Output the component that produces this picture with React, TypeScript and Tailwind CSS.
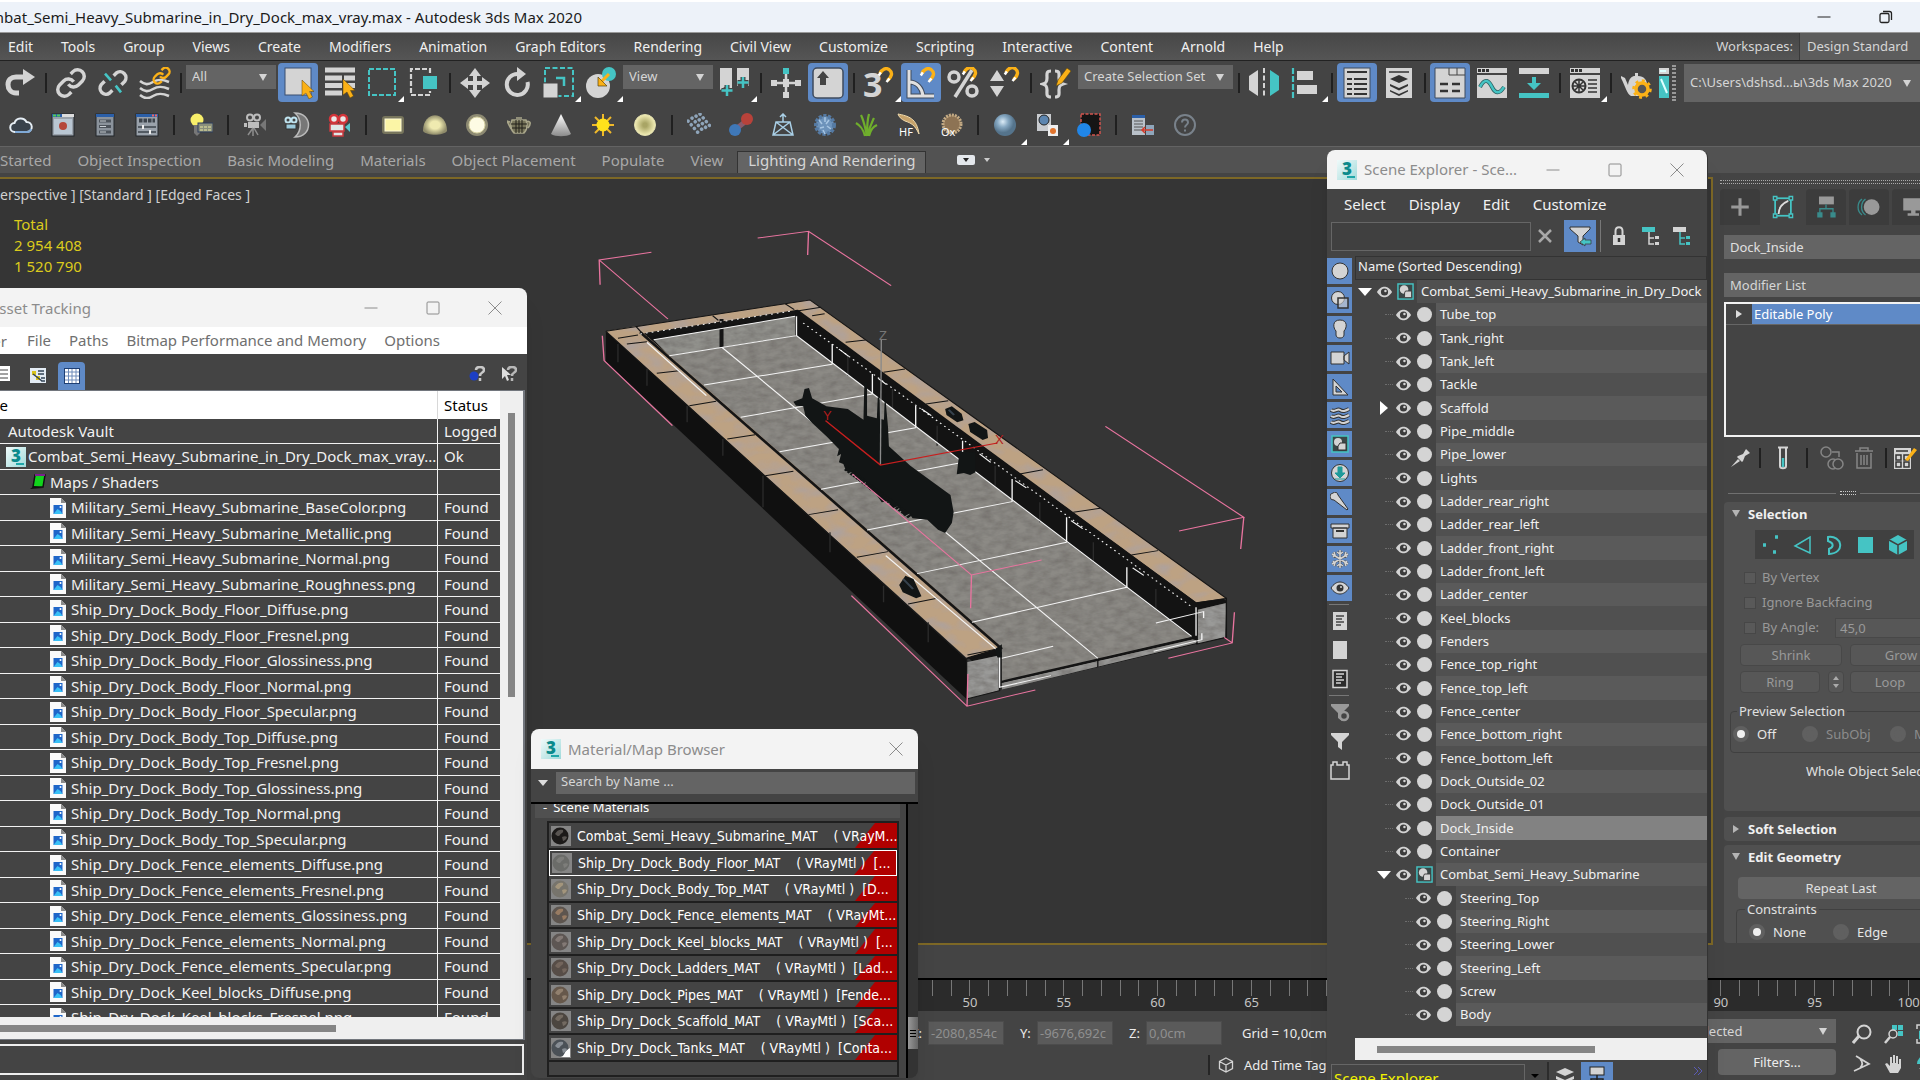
import type { ReactNode } from "react";
import clsx from "clsx";

const GRAY = "#d4d4d4";
const TEAL = "#45c4c4";
const ORANGE = "#fbb117";

const mainMenu = [
  "Edit", "Tools", "Group", "Views", "Create", "Modifiers", "Animation", "Graph Editors",
  "Rendering", "Civil View", "Customize", "Scripting", "Interactive", "Content", "Arnold", "Help",
];

const ribbonTabs = ["Started", "Object Inspection", "Basic Modeling", "Materials", "Object Placement", "Populate", "View"];

const maps = [
  "Military_Semi_Heavy_Submarine_BaseColor.png",
  "Military_Semi_Heavy_Submarine_Metallic.png",
  "Military_Semi_Heavy_Submarine_Normal.png",
  "Military_Semi_Heavy_Submarine_Roughness.png",
  "Ship_Dry_Dock_Body_Floor_Diffuse.png",
  "Ship_Dry_Dock_Body_Floor_Fresnel.png",
  "Ship_Dry_Dock_Body_Floor_Glossiness.png",
  "Ship_Dry_Dock_Body_Floor_Normal.png",
  "Ship_Dry_Dock_Body_Floor_Specular.png",
  "Ship_Dry_Dock_Body_Top_Diffuse.png",
  "Ship_Dry_Dock_Body_Top_Fresnel.png",
  "Ship_Dry_Dock_Body_Top_Glossiness.png",
  "Ship_Dry_Dock_Body_Top_Normal.png",
  "Ship_Dry_Dock_Body_Top_Specular.png",
  "Ship_Dry_Dock_Fence_elements_Diffuse.png",
  "Ship_Dry_Dock_Fence_elements_Fresnel.png",
  "Ship_Dry_Dock_Fence_elements_Glossiness.png",
  "Ship_Dry_Dock_Fence_elements_Normal.png",
  "Ship_Dry_Dock_Fence_elements_Specular.png",
  "Ship_Dry_Dock_Keel_blocks_Diffuse.png",
  "Ship_Dry_Dock_Keel_blocks_Fresnel.png",
];

interface Material {
  name: string;
  type: string;
  tone: string;
  spot: string;
}

const materials: Material[] = [
  { name: "Combat_Semi_Heavy_Submarine_MAT", type: "( VRayM...", tone: "#1c1a19", spot: "#8a8580" },
  { name: "Ship_Dry_Dock_Body_Floor_MAT", type: "( VRayMtl )  [...", tone: "#6b6c69", spot: "#8c8d88" },
  { name: "Ship_Dry_Dock_Body_Top_MAT", type: "( VRayMtl )  [D...", tone: "#77746c", spot: "#c9b08a" },
  { name: "Ship_Dry_Dock_Fence_elements_MAT", type: "( VRayMt...", tone: "#5d554f", spot: "#c99a72" },
  { name: "Ship_Dry_Dock_Keel_blocks_MAT", type: "( VRayMtl )  [...", tone: "#5d5653", spot: "#a39891" },
  { name: "Ship_Dry_Dock_Ladders_MAT", type: "( VRayMtl )  [Lad...", tone: "#574d47", spot: "#8a7a6e" },
  { name: "Ship_Dry_Dock_Pipes_MAT", type: "( VRayMtl )  [Fende...", tone: "#66584b", spot: "#b5a38c" },
  { name: "Ship_Dry_Dock_Scaffold_MAT", type: "( VRayMtl )  [Sca...", tone: "#4c4640", spot: "#94897b" },
  { name: "Ship_Dry_Dock_Tanks_MAT", type: "( VRayMtl )  [Conta...", tone: "#4b5157", spot: "#b9c0c6" },
];

interface Node {
  name: string;
  level: number;
  group?: boolean;
  arrow?: "open" | "closed";
}

const nodes: Node[] = [
  { name: "Combat_Semi_Heavy_Submarine_in_Dry_Dock", level: 0, group: true, arrow: "open" },
  ...["Tube_top", "Tank_right", "Tank_left", "Tackle"].map((name) => ({ name, level: 1 })),
  { name: "Scaffold", level: 1, arrow: "closed" },
  ...[
    "Pipe_middle", "Pipe_lower", "Lights", "Ladder_rear_right", "Ladder_rear_left", "Ladder_front_right",
    "Ladder_front_left", "Ladder_center", "Keel_blocks", "Fenders", "Fence_top_right", "Fence_top_left",
    "Fence_center", "Fence_bottom_right", "Fence_bottom_left", "Dock_Outside_02", "Dock_Outside_01",
    "Dock_Inside", "Container",
  ].map((name) => ({ name, level: 1 })),
  { name: "Combat_Semi_Heavy_Submarine", level: 1, group: true, arrow: "open" },
  ...["Steering_Top", "Steering_Right", "Steering_Lower", "Steering_Left", "Screw", "Body"].map((name) => ({ name, level: 2 })),
];

/* ---------- small shared pieces ---------- */

function Svg({ children, className = "size-8", box = 32 }: { children: ReactNode; className?: string; box?: number }) {
  return (
    <svg className={clsx("shrink-0", className)} viewBox={`0 0 ${box} ${box}`} fill="none" aria-hidden="true">
      {children}
    </svg>
  );
}

function Tool({ label, active, flyout, children }: { label: string; active?: boolean; flyout?: boolean; children: ReactNode }) {
  return (
    <button
      aria-label={label}
      className={clsx("relative flex h-[39px] w-10 shrink-0 items-center justify-center rounded", active && "bg-[#5f8ac7]")}
    >
      {children}
      {flyout && <span className="absolute -right-0.5 bottom-0 size-0 border-[3px] border-transparent border-r-white border-b-white" />}
    </button>
  );
}

function Sep({ wide }: { wide?: boolean }) {
  return (
    <span className={clsx("flex shrink-0 justify-center", wide ? "w-2.5" : "w-[7px]")}>
      <span className="h-5 w-0.5 bg-[#202020]" />
    </span>
  );
}

function Dropdown({ label, value, className }: { label: string; value: string; className: string }) {
  return (
    <div className={clsx("grid shrink-0 grid-cols-1 items-center bg-[#646464] text-[13px] leading-none text-[#d6d6d6]", className)}>
      <select aria-label={label} className="size-full appearance-none pl-1.5 [grid-area:1/1]">
        <option>{value}</option>
      </select>
      <svg className="pointer-events-none mr-2 h-2 w-2.5 justify-self-end [grid-area:1/1]" viewBox="0 0 10 8" fill={GRAY}>
        <path d="M1 1h8L5 8z" />
      </svg>
    </div>
  );
}

function MaxLogo() {
  return (
    <span className="relative flex size-5 shrink-0 justify-center bg-linear-to-br from-[#f0fafa] to-[#9fdada] text-[17px] leading-[18px] font-black text-[#0b8a8c]">
      3<span className="absolute right-0.5 bottom-0.5 h-0.5 w-2 bg-[#1fa6a8]" />
    </span>
  );
}

const Minimize = () => <Svg className="size-4" box={16}><path d="M1.500 8h13" stroke="currentColor" /></Svg>;
const Maximize = () => <Svg className="size-4" box={16}><rect x="2" y="2" width="12" height="12" rx="1" stroke="currentColor" /></Svg>;
const Close = () => <Svg className="size-4" box={16}><path d="M1.500 1.500l13 13M14.500 1.500l-13 13" stroke="currentColor" /></Svg>;

function Magnet({ x, y }: { x: number; y: number }) {
  return (
    <g transform={`translate(${x} ${y})`}>
      <path d="M2 6.500C4 2 8 0.500 11 2.500c4 3 3 7-1.500 11" stroke={ORANGE} strokeWidth="3.400" />
      <path d="M0.800 8.500l2-3.200M11.500 11.500l-3 3.500" stroke="#fff" strokeWidth="2.500" />
    </g>
  );
}

const Cursor = ({ x, y }: { x: number; y: number }) => (
  <path transform={`translate(${x} ${y})`} d="M0 0v16l4-3 3 6 3.500-2-3-5.500H12z" fill={ORANGE} stroke="#5c4308" strokeWidth=".5" />
);

const Eye = ({ className = "h-3.5 w-4" }: { className?: string }) => (
  <svg className={clsx("shrink-0", className)} viewBox="0 0 18 14" fill="none">
    <path d="M1 7C4 2.500 6.500 1.500 9 1.500S14 2.500 17 7c-3 4.500-5.500 5.500-8 5.500S4 11.500 1 7z" fill={GRAY} />
    <circle cx="9" cy="7" r="3.800" fill="#3c3c3c" />
    <circle cx="10" cy="6" r="1.300" fill={GRAY} />
  </svg>
);

function GroupIcon({ className = "size-4" }: { className?: string }) {
  return (
    <Svg className={className} box={18}>
      <rect x="1" y="1" width="16" height="16" fill="#3b4747" stroke={TEAL} strokeWidth="1.500" />
      <circle cx="7.500" cy="7" r="4.500" fill={GRAY} />
      <path d="M9 8.500h6.500v7H8v-5z" fill={GRAY} stroke="#3b3b3b" />
    </Svg>
  );
}

/* ---------- toolbars ---------- */

const chainA = "M10 13a5 5 0 0 0 7.540.54l3-3a5 5 0 0 0-7.070-7.070l-1.720 1.710";
const chainB = "M14 11a5 5 0 0 0-7.540-.54l-3 3a5 5 0 0 0 7.070 7.070l1.710-1.710";

function MainToolbar() {
  return (
    <div className="flex h-[43px] shrink-0 items-center gap-0.5 overflow-hidden">
      <Tool label="Redo">
        <Svg>
          <path d="M19 10h-7c-5 0-8 3-8 7.500S7 26 12 26h3" stroke={GRAY} strokeWidth="5" />
          <path d="M19 2l12 8-12 8z" fill={GRAY} />
        </Svg>
      </Tool>
      <Sep />
      <Tool label="Link"><Svg box={24}><path d={chainA} stroke={GRAY} strokeWidth="2.600" /><path d={chainB} stroke={GRAY} strokeWidth="2.600" /></Svg></Tool>
      <Tool label="Unlink">
        <Svg box={24}>
          <path d="M12.500 6.500l2-2a4.500 4.500 0 0 1 6.300 6.300l-2.500 2.500M11.500 17.500l-2 2a4.500 4.500 0 0 1-6.300-6.300l2.500-2.500" stroke={GRAY} strokeWidth="2.600" />
          <path d="M6 5l4.500 5M14 14l4 5" stroke={TEAL} strokeWidth="2" />
        </Svg>
      </Tool>
      <Tool label="Bind to Space Warp">
        <Svg>
          <path d="M1 14c5 4 8 4 13 1s9-3 16 0M1 21c5 4 8 4 13 1s9-3 16 0M1 28c5 4 8 4 13 1s9-3 16 0" stroke={GRAY} strokeWidth="2.600" />
          <g transform="translate(13 -1) scale(.8)"><path d={chainA} stroke={ORANGE} strokeWidth="3" /><path d={chainB} stroke={ORANGE} strokeWidth="3" /></g>
        </Svg>
      </Tool>
      <Sep />
      <Dropdown label="Selection filter" value="All" className="mb-3 h-6 w-[90px]" />
      <Tool label="Select object" active>
        <Svg><rect x="3" y="1" width="26" height="27" fill={GRAY} stroke="#3a4f70" /><Cursor x={20} y={13} /></Svg>
      </Tool>
      <Tool label="Select by name">
        <Svg><path d="M1 3h30M1 11h17M20 11h11M1 18.500h17M20 18.500h11M1 26h17" stroke={GRAY} strokeWidth="5" /><Cursor x={19} y={12} /></Svg>
      </Tool>
      <Tool label="Rectangular region" flyout>
        <Svg><rect x="3" y="2" width="26" height="26" stroke={TEAL} strokeWidth="2" strokeDasharray="5 2" /></Svg>
      </Tool>
      <Tool label="Window crossing">
        <Svg><path d="M22 6V2H3v26h19v-4" stroke={GRAY} strokeWidth="2.200" strokeDasharray="5 2" /><rect x="15" y="9" width="14" height="13" fill={TEAL} /></Svg>
      </Tool>
      <Sep />
      <Tool label="Move">
        <Svg>
          <path d="M16 5v22M5 16h22" stroke={GRAY} strokeWidth="4" />
          <path d="M16 1l6 8H10zM16 31l6-8H10zM1 16l8-6v12zM31 16l-8-6v12z" fill={GRAY} />
        </Svg>
      </Tool>
      <Tool label="Rotate">
        <Svg><path d="M17 7a10.500 10.500 0 1 0 9.500 8" stroke={GRAY} strokeWidth="4" /><path d="M16 0l9 7-9 7z" fill={GRAY} /></Svg>
      </Tool>
      <Tool label="Scale" flyout>
        <Svg>
          <rect x="2" y="1" width="28" height="28" stroke={TEAL} strokeWidth="2" strokeDasharray="5 2.500" />
          <rect x="0" y="16" width="15" height="15" fill={GRAY} stroke="#444" />
          <path d="M13 11h8v8" stroke={TEAL} strokeWidth="2.500" />
        </Svg>
      </Tool>
      <Tool label="Place" flyout>
        <Svg><circle cx="13" cy="19" r="12" fill={GRAY} /><circle cx="24" cy="7" r="7" fill={TEAL} /><path d="M24 7L15 16" stroke={ORANGE} strokeWidth="3" /><path d="M13 10v9h9z" fill={ORANGE} stroke="#55430f" strokeWidth=".7" /></Svg>
      </Tool>
      <Dropdown label="Reference coordinate system" value="View" className="mb-3 h-6 w-[90px]" />
      <Tool label="Pivot center" flyout>
        <Svg>
          <path d="M1 1h12v22l-6-4-6 4zM18 1h12v18l-6-5-6 5z" fill={GRAY} />
          <path d="M8 18v11M2.500 23.500h11M24 10v11M18.500 15.500h11" stroke="#444" strokeWidth="5" />
          <path d="M8 18v11M2.500 23.500h11M24 10v11M18.500 15.500h11" stroke={TEAL} strokeWidth="2.500" />
        </Svg>
      </Tool>
      <Sep />
      <Tool label="Select and manipulate">
        <Svg><path d="M16 5v22M4 16h24" stroke={GRAY} strokeWidth="2.500" /><path d="M13 12h6v8h-6zM1 13h6v6H1zM25 13h6v6h-6zM13 25h6v6h-6z" fill={GRAY} /><rect x="13" y="1" width="6" height="6" fill={TEAL} /></Svg>
      </Tool>
      <Tool label="Keyboard shortcut override" active>
        <Svg><rect x="1" y="1" width="30" height="30" rx="4" fill={GRAY} stroke="#3f4b5d" strokeWidth="1.500" /><path d="M11 4l6 7h-3v7H8v-7H5z" fill="#444" /></Svg>
      </Tool>
      <Sep />
      <Tool label="Snaps toggle" flyout>
        <Svg><text x="0" y="30" fontSize="34" fontWeight="700" fill={GRAY}>3</text><Magnet x={15} y={0} /></Svg>
      </Tool>
      <Tool label="Angle snap" active>
        <Svg><path d="M4 3v26h25M4 15c8 0 13 6 14 14" stroke="#3f4b5d" strokeWidth="5" /><path d="M4 3v26h25M4 15c8 0 13 6 14 14" stroke="#e0e0e0" strokeWidth="3" /><Magnet x={15} y={0} /></Svg>
      </Tool>
      <Tool label="Percent snap">
        <Svg><path d="M25 3L8 30" stroke={GRAY} strokeWidth="3.500" /><circle cx="7" cy="10" r="5" stroke={GRAY} strokeWidth="3.500" /><circle cx="25" cy="24" r="5" stroke={GRAY} strokeWidth="3.500" /><Magnet x={15} y={-1} /></Svg>
      </Tool>
      <Tool label="Spinner snap">
        <Svg><path d="M8 3l7 11H1zM8 30l7-11H1z" fill={GRAY} /><Magnet x={15} y={-1} /></Svg>
      </Tool>
      <Sep />
      <Tool label="Edit named selection sets">
        <Svg><path d="M11 4C6 4 7 7 7 11s-1 5-4 6c3 1 4 2 4 6s-1 7 4 7M15 4c5 0 4 3 4 7s1 5 4 6c-3 1-4 2-4 6s1 7-4 7" stroke={GRAY} strokeWidth="3.200" /><path d="M16 19l2-6L27 1l4 3-9 12z" fill={ORANGE} stroke="#55430f" strokeWidth=".6" /></Svg>
      </Tool>
      <Dropdown label="Named selection sets" value="Create Selection Set" className="mb-3 h-6 w-[155px]" />
      <Sep />
      <Tool label="Mirror">
        <Svg><path d="M1 3l9 6v14l-9 6z" fill={GRAY} transform="matrix(-1 0 0 1 11 0)" /><path d="M16 1v30" stroke={GRAY} strokeWidth="2" strokeDasharray="5 2.500" /><path d="M31 3l-9 6v14l9 6z" fill={TEAL} transform="matrix(-1 0 0 1 53 0)" /></Svg>
      </Tool>
      <Tool label="Align" flyout>
        <Svg><path d="M3 1v30" stroke={TEAL} strokeWidth="2.200" strokeDasharray="6 2" /><path d="M7 4h16v9H7zM7 18h20v9H7z" fill={GRAY} /></Svg>
      </Tool>
      <Sep />
      <Tool label="Toggle scene explorer" active>
        <Svg><rect x="3" y="1" width="26" height="30" fill={GRAY} stroke="#3f4b5d" /><path d="M6 5h20M6 12h5M13 12h13M6 17h5M13 17h13M6 22h5M13 22h13M6 27h5M13 27h13" stroke="#333" strokeWidth="2" /></Svg>
      </Tool>
      <Tool label="Toggle layer explorer">
        <Svg><rect x="3" y="1" width="26" height="30" fill={GRAY} /><path d="M6 5h20" stroke="#333" strokeWidth="1.500" /><path d="M16 8l9 4-9 4-9-4zM7 17l9 4 9-4v2l-9 4.500L7 19zM7 23l9 4 9-4v1.500l-9 4.500-9-4.500z" fill="#333" /></Svg>
      </Tool>
      <Sep />
      <Tool label="Toggle ribbon" active>
        <Svg><path d="M1 1h30v30H1z" fill={GRAY} stroke="#3f4b5d" /><path d="M15 1v7h16M23 1v7" stroke="#444" /><path d="M6 17h8M18 17h8M6 24h8M18 24h8" stroke="#333" strokeWidth="2.500" /></Svg>
      </Tool>
      <Tool label="Curve editor">
        <Svg><path d="M1 1h30v5H1zM1 8h30v23H1z" fill={GRAY} /><path d="M2 3.500h12" stroke="#333" strokeWidth="3" strokeDasharray="3 1" /><path d="M4 20c5-10 9-6 12 0s7 8 12 0" stroke="#2e5f5f" strokeWidth="4" /><path d="M4 20c5-10 9-6 12 0s7 8 12 0" stroke={TEAL} strokeWidth="2.500" /></Svg>
      </Tool>
      <Tool label="Schematic view">
        <Svg><path d="M1 1h30v6H1z" fill={GRAY} /><path d="M1 26h30v5H1zM14 10h4v6h5l-7 7-7-7h5z" fill={TEAL} /></Svg>
      </Tool>
      <Sep />
      <Tool label="Material editor" flyout>
        <Svg><path d="M1 1h30v5H1zM1 8h30v23H1z" fill={GRAY} /><path d="M2 3.500h12" stroke="#333" strokeWidth="3" strokeDasharray="3 1" /><circle cx="10" cy="19" r="6.500" stroke="#333" strokeWidth="2" /><path d="M10 13v12M4 19h12M6 15l8 8M14 15l-8 8M19 13h9M19 17h9M19 21h9M19 25h9" stroke="#333" strokeWidth="1.500" /></Svg>
      </Tool>
      <Sep />
      <Tool label="Render setup">
        <Svg><path d="M1 9l4 2 3 7c1-7 4-9 7-9V6h3v3c6 0 9 4 9 9s-3 10-4 11H11C7 27 6 21 1 11z" fill={GRAY} /><circle cx="22" cy="22" r="6" fill="#555" stroke={ORANGE} strokeWidth="3.500" /><circle cx="22" cy="22" r="8.500" stroke={ORANGE} strokeWidth="2.500" strokeDasharray="3 3.600" /></Svg>
      </Tool>
      <svg className="h-8 w-3 shrink-0" viewBox="0 0 12 32" fill="none">
        <path d="M1 1h10v6H1z" fill={GRAY} /><path d="M1 9h10v22H1z" fill={TEAL} /><path d="M2 4h6M3 12l6 14" stroke="#dff" strokeWidth="2" />
      </svg>
      <span className="h-9 w-1 shrink-0 border-x-2 border-dotted border-[#999]" />
      <Dropdown label="Project folder" value="C:\Users\dshsd...ы\3ds Max 2020" className="ml-auto h-[38px] w-[236px]" />
    </div>
  );
}

function MiniWindow({ children }: { children: ReactNode }) {
  return (
    <Svg className="size-6" box={24}>
      <rect x="1" y="1" width="22" height="22" fill="#9aa2ab" stroke="#22262b" />
      <path d="M1 1h22v3H1z" fill="#2b5fa8" />
      <path d="M17 2.500h6" stroke="#e66" strokeWidth="2" strokeDasharray="2 1" />
      {children}
    </Svg>
  );
}

function LightsToolbar() {
  return (
    <div className="flex h-[42px] shrink-0 items-center gap-0.5 overflow-hidden pl-px">
      <svg width="0" height="0" className="absolute">
        <defs>
          <radialGradient id="glow"><stop offset=".4" stopColor="#efeab0" /><stop offset="1" stopColor="#8f8b6a" /></radialGradient>
          <radialGradient id="ball" cx=".4" cy=".35"><stop offset="0" stopColor="#dcecf7" /><stop offset=".5" stopColor="#86a8c2" /><stop offset="1" stopColor="#55748c" /></radialGradient>
          <radialGradient id="disc"><stop offset=".2" stopColor="#a9a565" /><stop offset="1" stopColor="#f4efb8" /></radialGradient>
          <linearGradient id="cone" x1="0" x2="0" y1="0" y2="1"><stop offset="0" stopColor="#fff" /><stop offset="1" stopColor="#8a8a8a" /></linearGradient>
        </defs>
      </svg>
      <Tool label="Autodesk cloud"><Svg className="size-6" box={24}><path d="M6 19a4.500 4.500 0 0 1-.5-9A6.500 6.500 0 0 1 17.500 9 5 5 0 0 1 18 19z" fill="#39424c" stroke="#e6eef5" strokeWidth="2" /><path d="M6 19h12a4 4 0 0 0 4-3" stroke="#7fa9d6" strokeWidth="2" /></Svg></Tool>
      <Tool label="Frame buffer">
        <MiniWindow><path d="M2 2.500h8" stroke="#5c5" strokeWidth="2" strokeDasharray="3 1" /><path d="M11 1h12v3H11z" fill="#ddd" /><rect x="3" y="6" width="18" height="15" fill="#b9c6d2" /><circle cx="12" cy="13" r="4" fill="#b5483c" /></MiniWindow>
      </Tool>
      <Tool label="Light lister">
        <Svg className="size-6" box={24}><rect x="3" y="1" width="18" height="22" fill="#8b939c" stroke="#22262b" /><path d="M3 1h18v3H3z" fill="#2b5fa8" /><path d="M6 8h12M6 13.500h12M6 19h12" stroke="#4d545c" strokeWidth="3" /><path d="M7 8h6M7 13.500h6M7 19h6" stroke="#c9ced3" /></Svg>
      </Tool>
      <Tool label="Camera lister"><MiniWindow><path d="M4 7.500h16" stroke="#3d444c" strokeWidth="4" strokeDasharray="3.500 1" /><path d="M3 14h18M3 19h18" stroke="#3d444c" strokeWidth="1.500" /><path d="M8 12v4M15 17v4" stroke="#eee" strokeWidth="2" /></MiniWindow></Tool>
      <Sep wide />
      <Tool label="Light mix"><Svg className="size-6" box={24}><circle cx="8" cy="7" r="6.500" fill="#f8ef6a" /><path d="M5 12h6v8l-3 3-3-3z" fill="#777" /><rect x="9" y="10" width="15" height="9" fill="#8a8f7c" stroke="#2c3c5c" /><path d="M11 14h11M11 17h11" stroke="#e9e7a0" strokeDasharray="3 1" /></Svg></Tool>
      <Sep wide />
      <Tool label="Physical camera">
        <Svg className="size-6" box={24}>
          <circle cx="7" cy="4.500" r="3" stroke="#bdbdbd" strokeWidth="2" /><circle cx="14" cy="4.500" r="3" stroke="#bdbdbd" strokeWidth="2" />
          <path d="M5 9h11v6H5zM1 10h3v4H1z" fill="#bdbdbd" /><path d="M10 15l-5 7M10 15v8M11 15l4 7" stroke="#8d8d8d" strokeWidth="1.500" /><path d="M17 12l6-6v12z" fill="#777" />
        </Svg>
      </Tool>
      <Tool label="Dome camera"><Svg className="size-7" box={28}><path d="M12 2c18 0 18 24 0 24 7-6 7-18 0-24z" fill="#777" stroke="#bbb" strokeWidth="1.500" /><circle cx="5" cy="9" r="2.500" stroke="#bfe3ef" strokeWidth="2" /><circle cx="11" cy="9" r="2.500" stroke="#bfe3ef" strokeWidth="2" /><path d="M3 13h10v5H3zM15 13v4" fill="#9ccadb" stroke="#333" /></Svg></Tool>
      <Tool label="Stereo camera"><Svg className="size-6" box={24}><circle cx="7" cy="6" r="4" fill="#e8e8e8" stroke="#d3343a" strokeWidth="2.500" /><circle cx="16" cy="6" r="4" fill="#e8e8e8" stroke="#d3343a" strokeWidth="2.500" /><path d="M3 11h14v7H3zM6 19h10v4H6z" fill="#dfe7e7" stroke="#c93a3f" strokeWidth="1.500" /><path d="M18 14l5-4v9z" fill="#58c9cf" /></Svg></Tool>
      <Sep wide />
      <Tool label="Plane light"><Svg className="size-6" box={24}><rect x="1" y="3" width="22" height="18" rx="3" fill="#77755c" /><rect x="4" y="6" width="16" height="12" fill="#fbf5a6" stroke="#fffbd9" /></Svg></Tool>
      <Tool label="Dome light"><Svg className="size-6" box={24}><path d="M0 18C0-3 24-3 24 18c-4 5-20 5-24 0z" fill="url(#glow)" /></Svg></Tool>
      <Tool label="Sphere light"><Svg className="size-6" box={24}><circle cx="12" cy="12" r="11" fill="#8d8a72" /><circle cx="12" cy="12" r="8" fill="#fdfbe4" stroke="#d5d0a0" /></Svg></Tool>
      <Tool label="Mesh light"><Svg className="size-6" box={24}><path d="M5 7h14c2 6 1 10-2 13H7C4 17 3 12 5 7zM9 5h6M3 9l-3-1 4 8M19 9c4-2 6 1 2 6" stroke="#a9a68a" fill="#77745a" strokeWidth="1.500" /><path d="M4 11h16M5 15h14M9 7v13M12 7v13M15 7v13" stroke="#22211a" /></Svg></Tool>
      <Tool label="IES light"><Svg className="size-6" box={24}><path d="M12 1l10 20c-4 3-16 3-20 0z" fill="url(#cone)" /></Svg></Tool>
      <Tool label="Sun light"><Svg className="size-6" box={24}><path d="M12 1v22M1 12h22M4 4l16 16M20 4L4 20" stroke="#f0b92a" strokeWidth="2" /><circle cx="12" cy="12" r="6.500" fill="#ffe21c" /></Svg></Tool>
      <Tool label="Ambient light"><Svg className="size-6" box={24}><circle cx="12" cy="12" r="10.500" fill="url(#disc)" stroke="#e2dfae" /></Svg></Tool>
      <Sep wide />
      <Tool label="Instancer"><Svg className="size-6" box={24}><path d="M1 8l12 14M5 5l12 14M9 3l11 13M13 1l10 12" stroke="#8fa5ba" strokeWidth="3.500" strokeLinecap="round" strokeDasharray=".1 4.800" /></Svg></Tool>
      <Tool label="Metaballs"><Svg className="size-6" box={24}><path d="M7 16L17 8" stroke="#8a5a6a" strokeWidth="5" /><circle cx="6" cy="17" r="6" fill="#3f78b8" /><circle cx="18" cy="6" r="6" fill="#b8423a" /></Svg></Tool>
      <Tool label="Proxy"><Svg className="size-6" box={24}><path d="M5 9h14l3 13H2zM5 9l17 13M19 9L2 22M12 9V1M9 4l3-3 3 3" stroke="#a9cfe6" strokeWidth="1.500" /></Svg></Tool>
      <Tool label="Fur"><Svg className="size-6" box={24}><circle cx="12" cy="12" r="9" fill="#6d93bb" stroke="#557aa3" strokeWidth="4" strokeDasharray="3 1.500" /><path d="M6 7l3 4M12 4v5M16 7l-3 4M7 15l4-1M14 13l4 3M10 17l2 4" stroke="#a8c6e3" strokeWidth="1.500" /></Svg></Tool>
      <Tool label="Grass"><Svg className="size-6" box={24}><path d="M12 23C10 14 9 8 6 2M12 23C12 14 12 8 14 1M13 23c1-9 3-12 6-18M10 23C8 16 6 13 1 10M14 23c2-7 4-9 8-11" stroke="#6fae2c" strokeWidth="2.200" /></Svg></Tool>
      <Tool label="Hair Farm"><span className="relative flex"><Svg className="size-6" box={24}><path d="M1 1c10 2 19 4 21 20-4-9-8-11-14-13C4 6 2 4 1 1z" fill="#c7a36b" stroke="#eed9ac" /></Svg><span className="absolute bottom-0 left-0.5 text-[11px] leading-none text-white">HF</span></span></Tool>
      <Tool label="Ornatrix"><span className="relative flex"><Svg className="size-6" box={24}><circle cx="13" cy="11" r="9" fill="#8d7354" stroke="#c4ab85" strokeWidth="3" strokeDasharray="2 1" /></Svg><span className="absolute bottom-0 left-0.5 text-[11px] leading-none text-white">Ox</span></span></Tool>
      <Sep wide />
      <Tool label="V-Ray material" flyout><Svg className="size-6" box={24}><circle cx="12" cy="12" r="11" fill="url(#ball)" /></Svg></Tool>
      <Tool label="Material converter" flyout><Svg className="size-6" box={24}><rect x="2" y="1" width="14" height="17" fill="#c9ccd0" /><circle cx="9" cy="7" r="5" fill="#5d86b0" stroke="#222" /><rect x="13" y="12" width="10" height="11" fill="#eee" /><circle cx="18" cy="18" r="3" fill="#e2742d" /></Svg></Tool>
      <Tool label="Render mask"><Svg className="size-6" box={24}><rect x="4" y="1" width="19" height="21" fill="#151515" stroke="#d2544e" strokeWidth="1.500" strokeDasharray="3 1.500" /><circle cx="7" cy="17" r="7" fill="#2186e8" /></Svg></Tool>
      <Sep wide />
      <Tool label="Scene converter"><Svg className="size-6" box={24}><rect x="1" y="2" width="13" height="20" fill="#b9c1c9" /><path d="M1 2h13v3H1z" fill="#2b5fa8" /><path d="M3 8h9M3 11h9M3 14h9M3 17h9" stroke="#555" /><rect x="15" y="12" width="8" height="10" fill="#8fa6bb" /><path d="M22 17H11M14 14l-3 3 3 3" stroke="#d43a2a" strokeWidth="1.500" /></Svg></Tool>
      <Tool label="Help"><Svg className="size-6" box={24}><circle cx="12" cy="12" r="10" stroke="#79828b" strokeWidth="2" /><path d="M9 9.500c0-4 6-4 6 0 0 2.500-3 2-3 5M12 16.500v2" stroke="#79828b" strokeWidth="2" /></Svg></Tool>
    </div>
  );
}

/* ---------- viewport ---------- */

function DockScene() {
  return (
    <svg className="absolute top-10 left-[580px] h-[500px] w-[700px]" viewBox="0 0 700 500" fill="none">
      <defs>
        <filter id="concrete" x="0" y="0" width="1" height="1">
          <feTurbulence type="fractalNoise" baseFrequency=".04 .06" numOctaves="3" seed="4" />
          <feColorMatrix values="0 0 0 0 .16  0 0 0 0 .15  0 0 0 0 .14  1.300 0 0 0 -.38" />
          <feComposite in2="SourceGraphic" operator="in" />
          <feMerge><feMergeNode in="SourceGraphic" /><feMergeNode /></feMerge>
        </filter>
        <filter id="stone" x="0" y="0" width="1" height="1">
          <feTurbulence type="fractalNoise" baseFrequency=".02 .03" numOctaves="2" seed="9" />
          <feColorMatrix values="0 0 0 0 .4  0 0 0 0 .36  0 0 0 0 .36  1.800 0 0 0 -.75" />
          <feComposite in2="SourceGraphic" operator="in" />
          <feMerge><feMergeNode in="SourceGraphic" /><feMergeNode /></feMerge>
        </filter>
      </defs>
      <g transform="scale(.4464 .3333)">
        {/* walls and floor */}
        <path d="M58 337L865 1322 867 1442 58 428z" fill="#101010" />
        <path d="M120 330L515 250 1448 1145 1445 1255 945 1412 700 1100z" fill="#131313" />
        <g filter="url(#concrete)">
          <path d="M165 362L482 292V350L200 410z" fill="#92928d" />
          <path d="M200 410L485 350 1370 1255 945 1388V1300z" fill="#8c8a85" />
          <path d="M945 1392L1372 1262 1395 1268 945 1412zM866 1330L938 1310V1415L867 1440zM1384 1172L1448 1152 1445 1255 1384 1275z" fill="#9a9a98" />
        </g>
        <g filter="url(#stone)" fill="#bda283">
          <path d="M58 337L125 322 945 1285 865 1316z" />
          <path d="M58 337L515 243 532 262 480 274 145 343 90 366z" />
          <path d="M515 243L1448 1138 1380 1150 478 262z" />
        </g>
        <g stroke="#151515" strokeWidth="3">
          <path d="M58 337L515 243 1448 1138M58 337L865 1320 945 1288M485 278L1380 1152 1448 1138V1255L1382 1275V1165M866 1320V1440L940 1415V1305" />
          <path d="M135 340L945 1290" strokeWidth="7" />
          <path d="M85 358l45-10M105 375l45-7M172 463l50-8M245 560l60-13M330 660l62-13M415 770l63-13M512 887l66-15M620 1015l70-17M735 1155l65-17M868 1308l67-18" />
          <path d="M490 275l50-10M520 290l28-6M595 370l45-7M680 460l48-10M775 555l50-10M985 765l52-13M1105 880l60-12M1235 1008l60-13M125 322l15 22M297 290l13 14M460 255l20 17" />
          <path d="M150 348L482 282" strokeWidth="13" />
          <path d="M317 300v85" strokeWidth="9" />
          <path d="M945 1388L1370 1257" strokeWidth="6" />
          <path d="M1160 1320v25" />
        </g>
        <path d="M410 770v95M85 430V375M150 500v-50M240 610v-50M320 710v-50M560 1000v-60M680 1150v-50M780 1270v-60M600 410v60M700 510v60M800 620v60M930 740v60M1030 850v60M1150 970v60M1290 1110v60" stroke="#2b2b2b" strokeWidth="3" />
        {/* edged faces */}
        <g stroke="#f4f4f4" strokeWidth="3">
          <path d="M200 410L485 350V292M278 498L565 436M360 595L655 525M447 698L752 626M540 811L850 732M643 933L968 848M755 1064L1090 970M878 1210L1225 1105M318 385L1160 1318M485 350L1370 1252" />
          <path d="M565 375v61M655 465v60M752 560v66M857 665v67M968 780v68M1090 895v75M1225 1045v60" />
          <path d="M150 370L283 530M685 1010L940 1300V1405L1055 1370M945 1318L1060 1282M1290 1212L1397 1178V1197M1285 1297L1393 1262V1243M1380 1165V1250" />
          <path d="M165 362L482 292" />
          <path d="M135 345L475 276M500 312L1372 1165" strokeDasharray="4 9" />
          <path d="M580 390l22 22M668 478l18 18M765 570l22 20M895 705l25 25M975 785l25 22M1100 905l26 24M1238 1047l25 22" />
        </g>
        {/* submarine */}
        <path
          fill="#121515"
          d="M478 548L498 538 503 510 513 507 520 538 552 562 600 570 635 602 637 490 643 490 643 590 665 598 667 535 671 535 672 600 681 602 683 520 690 625 692 682 740 740 830 828 837 880 833 912 818 942 802 932 778 902 745 898 738 884 726 890 712 862 700 868 690 846 676 850 660 820 648 812 640 790 625 786 612 762 596 756 590 735 580 730 585 705 576 712 580 690 552 652 520 612 505 590 500 562 484 560z"
        />
        <path d="M596 748L740 893" stroke="#121515" strokeWidth="14" strokeDasharray="6 3" />
        <path fill="#121515" d="M818 570l15-8 22 22 4 20-14 6-24-22zM870 615l14-6 28 24 2 24-12 6-28-24zM850 698l36 2v60l-12 8-14-6-16 4zM715 1098l14-28 18 10 18 52-12 6-30-18zM930 1290l15-14v40h-10z" />
        <path d="M724 1080l22 30M826 572l12 16" stroke="#36424d" strokeWidth="5" />
        {/* selection brackets */}
        <g stroke="#e8749f" strokeWidth="3">
          <path d="M160 100L43 123 45 197M43 123L197 300M398 57L512 37 510 108M512 37L697 200M1177 622L1487 895 1342 936M1487 895L1480 990M50 350L54 425 207 620" />
          <path d="M608 1130L867 1462 1020 1413M867 1462L869 1365M1466 1180L1461 1272 1318 1318M1443 1255l18 17M610 765L877 1068 1034 1023M877 1068L875 1168" />
        </g>
        <path d="M673 738L675 360" stroke="#8a8a8a" strokeWidth="3" />
        <path d="M550 605L673 738 935 672" stroke="#c81e1e" strokeWidth="3.500" />
      </g>
      <g fontSize="13" fontFamily="Liberation Sans, sans-serif">
        <text x="299" y="121" fill="#777">Z</text>
        <text x="243" y="201" fill="#b01c1c">Y</text>
        <text x="415" y="225" fill="#b01c1c">X</text>
      </g>
    </svg>
  );
}

function Viewport() {
  return (
    <main className="relative min-w-0 flex-1 overflow-hidden border-y-2 border-r-2 border-[#7d6826] bg-[#353535] text-sm">
      <p className="mt-1.5 flex h-5 w-[250px] items-center justify-end overflow-hidden whitespace-nowrap text-[#d0d0d0]">
        [+] [Perspective ] [Standard ] [Edged Faces ]
      </p>
      <div className="mt-[9px] ml-3.5 flex flex-col text-[15px] leading-[21px] text-[#dccb1c]">
        <span>Total</span>
        <span>2 954 408</span>
        <span>1 520 790</span>
      </div>
      <DockScene />
    </main>
  );
}

/* ---------- command panel ---------- */

function Rollout({ title, open, children, className }: { title: string; open?: boolean; children?: ReactNode; className?: string }) {
  return (
    <section className={clsx("shrink-0 overflow-hidden rounded bg-[#505050]", className)}>
      <h3 className="flex h-6 items-center gap-2 pl-2 text-[13px] font-bold text-[#f0f0f0]">
        <svg className="size-2" viewBox="0 0 8 8" fill="#b5b5b5"><path d={open ? "M0 0h8L4 7z" : "M1 0l6 4-6 4z"} /></svg>
        {title}
      </h3>
      {children}
    </section>
  );
}

function Check({ label }: { label: string }) {
  return (
    <label className="flex h-[25px] items-center gap-1.5">
      <input type="checkbox" disabled className="size-3 appearance-none border border-[#474747] bg-[#595959]" />
      {label}
    </label>
  );
}

function Radio({ label, name, checked, disabled, className }: { label: string; name: string; checked?: boolean; disabled?: boolean; className?: string }) {
  return (
    <label className={clsx("flex shrink-0 items-center gap-2", disabled ? "text-[#8c8c8c]" : "text-[#e6e6e6]", className)}>
      <input
        type="radio"
        name={name}
        defaultChecked={checked}
        disabled={disabled}
        className="size-4 appearance-none rounded-full border-4 border-[#606060] bg-[#606060] checked:bg-[#f0f0f0]"
      />
      {label}
    </label>
  );
}

const panelButton = "flex shrink-0 items-center justify-center rounded border border-[#484848] bg-[#575757]";

function CommandPanel() {
  return (
    <aside className="flex w-[207px] shrink-0 flex-col overflow-hidden pt-[3px] pl-[7px] text-[13px] leading-none text-[#e0e0e0]">
      <div className="h-1 shrink-0 border-y border-dotted border-[#aaa]" />
      <div className="mt-[5px] flex h-9 w-60 shrink-0 gap-[3px]">
        {[
          <path key="c" d="M16 6v20M6 16h20" stroke="#999" strokeWidth="3.500" />,
          <g key="m"><rect x="7" y="6" width="18" height="20" stroke={TEAL} strokeWidth="2" /><path d="M5 4h4v4H5zM23 4h4v4h-4zM5 24h4v4H5zM23 24h4v4h-4z" fill="#444" stroke={TEAL} strokeWidth="1.500" /><path d="M11 24c0-8 4-12 11-15" stroke="#ddd" strokeWidth="2" /></g>,
          <g key="h"><rect x="8" y="4" width="17" height="9" fill="#999" /><path d="M16 13v5M9 23v-5h15v5" stroke="#398b8b" strokeWidth="1.500" /><path d="M6 22h6v6H6zM21 22h6v6h-6z" fill="#398b8b" /></g>,
          <g key="o"><circle cx="19" cy="16" r="9" fill="#999" /><path d="M12 7c-6 4-6 14 0 18M8 7c-6 4-6 14 0 18" stroke="#398b8b" strokeWidth="1.500" /></g>,
          <path key="d" d="M6 6h22v14H6zM15 20h5v3h4v3H11v-3h4z" fill="#999" />,
        ].map((icon, i) => (
          <button key={i} aria-label={["Create", "Modify", "Hierarchy", "Motion", "Display"][i]} className={clsx("flex w-10 shrink-0 items-center justify-center rounded-t", i !== 1 && "bg-[#3c3c3c]")}>
            <Svg className="size-7">{icon}</Svg>
          </button>
        ))}
      </div>
      <input aria-label="Object name" defaultValue="Dock_Inside" className="mt-2.5 ml-1 h-6 shrink-0 bg-[#646464] pl-1.5" />
      <Dropdown label="Modifier list" value="Modifier List" className="mt-3.5 -mr-8 ml-1 h-6" />
      <div className="mt-[5px] ml-1 h-[135px] shrink-0 border-2 border-r-0 border-[#f2f2f2]">
        <div className="flex h-[21px] items-center border-b border-[#666]">
          <span className="flex w-[26px] justify-center text-[#ddd]"><svg className="size-2" viewBox="0 0 8 8" fill="currentColor"><path d="M1 0l6 4-6 4z" /></svg></span>
          <span className="flex h-full flex-1 items-center bg-[#5f8ac7] pl-0.5 text-white">Editable Poly</span>
        </div>
      </div>
      <div className="mt-[5px] ml-1 flex h-8 w-60 shrink-0 items-center">
        <button aria-label="Pin stack" className="flex w-8 justify-center"><Svg className="size-5" box={20}><path d="M1 19l7-8 2 2zM8 8l5-2 3-5 4 4-5 3-2 5-1 1-5-5z" fill={GRAY} /></Svg></button>
        <Sep />
        <button aria-label="Show end result" className="flex w-10 justify-center"><Svg className="size-6" box={24}><path d="M7 1.500h10M9 2v18c0 3 6 3 6 0V2" stroke={GRAY} strokeWidth="2" /><path d="M12 12v9" stroke={TEAL} strokeWidth="2.500" /></Svg></button>
        <Sep />
        <button aria-label="Make unique" className="flex w-9 justify-center pl-2"><Svg className="size-6" box={24}><circle cx="6" cy="6" r="5" stroke="#858585" strokeWidth="1.500" /><circle cx="13" cy="18" r="5" fill="#444" stroke="#858585" strokeWidth="1.500" /><circle cx="18" cy="18" r="5" fill="#444" stroke="#858585" strokeWidth="1.500" /><path d="M12 6h7v5" stroke="#858585" strokeWidth="1.500" /></Svg></button>
        <button aria-label="Remove modifier" className="flex w-9 justify-center"><Svg className="size-6" box={24}><path d="M3 5h18M8 5V2h8v3M5 7v15h14V7M9 9v10M12 9v10M15 9v10" stroke="#858585" strokeWidth="1.500" /></Svg></button>
        <Sep />
        <button aria-label="Configure modifier sets" className="flex w-8 justify-center"><Svg className="size-6" box={24}><path d="M1 2h17v21H1z" fill={GRAY} /><path d="M3 5h12M3 9h5v5H3zM11 9h5v5h-5zM3 16h5v5H3zM11 16h5v5h-5z" stroke="#333" strokeWidth="1.500" /><path d="M12 14l9-12 3 2-9 11z" fill={ORANGE} /></Svg></button>
      </div>
      <div className="mt-4 ml-2 flex h-1.5 w-60 shrink-0 items-center gap-1">
        <span className="h-px flex-1 bg-[#707070]" />
        <span className="h-1 w-4 border-y border-dotted border-[#ccc]" />
        <span className="h-px flex-1 bg-[#707070]" />
      </div>
      <Rollout title="Selection" open className="mt-1.5 -mr-8 ml-1 h-[309px]">
        <div className="mt-1 ml-[31px] flex h-[29px] w-[159px] items-center justify-around bg-[#404040]">
          <Svg className="size-5" box={20}><path d="M2 10h3M14 2h3M12 17h3" stroke={TEAL} strokeWidth="3.500" /></Svg>
          <Svg className="size-5" box={20}><path d="M2 11L17 2v16z" stroke={TEAL} strokeWidth="1.500" /></Svg>
          <Svg className="size-5" box={20}><path d="M4 2c14-2 18 16 1 17v-5c5-2 5-6-1-8z" stroke={TEAL} strokeWidth="2" /></Svg>
          <Svg className="size-5" box={20}><rect x="2" y="2" width="15" height="16" fill={TEAL} /></Svg>
          <Svg className="size-5" box={20}><path d="M10 0l9 5v10l-9 5-9-5V5z" fill={TEAL} /><path d="M1 5l9 5 9-5M10 10v10" stroke="#404040" strokeWidth="1.500" /></Svg>
        </div>
        <div className="mt-1.5 ml-5 flex flex-col text-[#999]">
          <Check label="By Vertex" />
          <Check label="Ignore Backfacing" />
          <div className="flex items-center">
            <Check label="By Angle:" />
            <input aria-label="Angle" disabled defaultValue="45,0" className="ml-4 h-5 w-24 border border-[#484848] bg-[#575757] pl-1" />
          </div>
          <div className="mt-1 -ml-1 flex gap-2">
            <button disabled className={clsx(panelButton, "h-[22px] w-[102px]")}>Shrink</button>
            <button disabled className={clsx(panelButton, "h-[22px] w-[102px]")}>Grow</button>
          </div>
          <div className="mt-[5px] -ml-1 flex gap-2">
            <button disabled className={clsx(panelButton, "h-[22px] w-20")}>Ring</button>
            <button disabled aria-label="Ring shift" className={clsx(panelButton, "-mr-0.5 h-[22px] w-4")}><svg className="h-3 w-2" viewBox="0 0 8 12" fill="#aaa"><path d="M4 0l3 4H1zM4 12l3-4H1z" /></svg></button>
            <button disabled className={clsx(panelButton, "h-[22px] w-20")}>Loop</button>
          </div>
        </div>
        <fieldset className="mt-3 ml-1.5 h-12 rounded border border-[#404040] pl-0.5">
          <legend className="ml-1 px-0.5">Preview Selection</legend>
          <div className="mt-2 flex">
            <Radio name="preview" label="Off" checked className="w-[69px]" />
            <Radio name="preview" label="SubObj" disabled className="w-[88px]" />
            <Radio name="preview" label="Multi" disabled />
          </div>
        </fieldset>
        <p className="mt-3 ml-[82px] whitespace-nowrap">Whole Object Selected</p>
      </Rollout>
      <Rollout title="Soft Selection" className="mt-1.5 -mr-8 ml-1" />
      <Rollout title="Edit Geometry" open className="mt-1 -mr-8 ml-1 h-[98px]">
        <button className="mt-2 ml-3.5 flex h-[22px] w-[206px] items-center justify-center rounded bg-[#646464]">Repeat Last</button>
        <fieldset className="mt-1 ml-3 h-14 rounded border border-[#404040] pl-3">
          <legend className="-ml-1 px-0.5">Constraints</legend>
          <div className="mt-2 flex">
            <Radio name="constraint" label="None" checked className="w-[84px]" />
            <Radio name="constraint" label="Edge" />
          </div>
        </fieldset>
      </Rollout>
    </aside>
  );
}

/* ---------- time line and status ---------- */

// only the frames that are not under a floating window are numbered
const isNumbered = (frame: number) => frame % 5 === 0 && ((frame >= 50 && frame <= 65) || frame >= 90);

function TimeRuler() {
  return (
    <div className="mt-[33px] shrink-0 border-t-2 border-black bg-[#2b2b2b] pr-0.5 pl-[22px] text-[13px] leading-none text-[#c4c4c4]">
      <div className="grid h-[31px] grid-cols-[repeat(101,minmax(0,1fr))]">
        {Array.from({ length: 101 }, (_, i) => (
          <div key={i} className="flex flex-col items-center">
            <span className="h-4 w-px shrink-0 bg-[#777]" />
            {isNumbered(i) && <span>{i}</span>}
          </div>
        ))}
      </div>
    </div>
  );
}

function StatusBar() {
  return (
    <div className="flex h-[69px] shrink-0 overflow-hidden text-[13px] leading-none text-[#ececec]">
      <div className="flex flex-1 flex-col gap-2 pt-2.5">
        <div className="flex h-6 items-center pl-[911px]">
          {[["X:", "-2080,854c"], ["Y:", "-9676,692c"], ["Z:", "0,0cm"]].map(([axis, value]) => (
            <label key={axis} className="mr-4 flex items-center gap-1">
              <span className="w-[13px]">{axis}</span>
              <input disabled defaultValue={value} className="h-6 w-[76px] border border-[#4c4c4c] bg-[#5a5a5a] pl-0.5 text-[#8f8f8f]" />
            </label>
          ))}
          <span className="ml-1">Grid = 10,0cm</span>
        </div>
        <button className="ml-[1208px] flex h-6 w-40 items-center gap-2 whitespace-nowrap">
          <span className="h-5 w-0.5 bg-[#252525]" />
          <Svg className="size-4" box={16}><path d="M8 1l6.500 3.500v7L8 15l-6.500-3.500v-7zM1.500 4.500L8 8l6.500-3.500M8 8v7" stroke={GRAY} strokeWidth="1.300" /></Svg>
          <span className="ml-0.5">Add Time Tag</span>
        </button>
      </div>
      <div className="flex w-60 shrink-0 gap-2.5 pt-2">
        <div className="flex w-[156px] shrink-0 flex-col items-end gap-1.5">
          <Dropdown label="Key filter" value="Selected" className="h-6 w-[151px]" />
          <button className="h-[26px] w-[118px] rounded bg-[#646464]">Filters...</button>
        </div>
        <div className="grid h-[60px] w-24 shrink-0 grid-cols-3 items-center justify-items-center">
          <Svg className="size-5" box={20}><circle cx="12" cy="8" r="6.500" stroke={GRAY} strokeWidth="2" /><path d="M7 12l-6 7" stroke={GRAY} strokeWidth="3" /></Svg>
          <Svg className="size-5" box={20}><path d="M8 1h5v5H8zM14 1h5v5h-5zM14 7h5v5h-5z" fill={TEAL} /><circle cx="9" cy="10" r="4" stroke={GRAY} strokeWidth="1.500" /><path d="M6 13l-5 6" stroke={GRAY} strokeWidth="2.500" /></Svg>
          <Svg className="size-5" box={20}><path d="M1 5V1h4M1 15v4h4" stroke={GRAY} strokeWidth="1.500" /><path d="M3 7l8-4 8 4v8l-8 4-8-4z" fill={TEAL} /></Svg>
          <Svg className="size-5" box={20}><path d="M4 2l13 8-15 7M8 5c3 3 3 6 0 9" stroke={GRAY} strokeWidth="1.700" /></Svg>
          <Svg className="size-5" box={20}><path d="M6 19L1 10l2-1 3 3V3h2v6h1V1h2v8h1V2h2v8h1V5h2v9l-3 5z" fill={GRAY} /></Svg>
          <Svg className="size-5" box={20}><path d="M1 10a9 9 0 0 1 18 0z" fill={TEAL} /><path d="M3 14l10 1-4 4z" fill={GRAY} /></Svg>
        </div>
      </div>
    </div>
  );
}

/* ---------- floating windows ---------- */

function FileIcon() {
  return (
    <svg className="h-5 w-4 shrink-0" viewBox="0 0 16 20" fill="none">
      <path d="M0 0h11l5 5v15H0z" fill="#fafafa" />
      <path d="M11 0l5 5h-5z" fill="#8b8b8b" />
      <rect x="3.500" y="7" width="9" height="9" fill="#1e66c9" />
      <path d="M3.500 16l4-5 3 2 2 3z" fill="#39c0f5" />
      <circle cx="10.500" cy="9" r="1" fill="#fff" />
    </svg>
  );
}

function AssetRow({ icon, name, status, className }: { icon?: ReactNode; name: string; status: string; className: string }) {
  return (
    <tr className="h-[25px] even:h-[26px]">
      <td className="border-r border-b border-[#f2f2f2] p-0">
        <div className={clsx("flex h-6 items-center overflow-hidden whitespace-nowrap", className)}>{icon}{name}</div>
      </td>
      <td className="border-b border-[#f2f2f2] p-0 pl-1.5">{status}</td>
    </tr>
  );
}

function AssetTracking() {
  return (
    <section className="absolute top-[288px] bottom-0 left-0 flex w-[527px] flex-col overflow-hidden rounded-tr-lg bg-[#444] text-[15px] leading-none text-[#f2f2f2] shadow-xl">
      <header className="flex h-[39px] shrink-0 items-center bg-[#f3f3f3] text-[#8c8c8c]">
        <h2 className="flex w-[91px] justify-end overflow-hidden leading-5 whitespace-nowrap">Asset Tracking</h2>
        <div className="ml-auto flex gap-[46px] pr-6"><Minimize /><Maximize /><Close /></div>
      </header>
      <nav className="flex h-[27px] shrink-0 items-center gap-[18px] bg-white text-[#6f6f6f]">
        <button className="mr-0.5 flex w-[7px] justify-end overflow-hidden leading-5">Server</button>
        {["File", "Paths", "Bitmap Performance and Memory", "Options"].map((m) => <button key={m}>{m}</button>)}
      </nav>
      <div className="flex h-9 shrink-0 items-end">
        <button aria-label="List view" className="mb-2 flex w-2.5 justify-end overflow-hidden"><Svg className="size-4" box={16}><rect width="16" height="15" fill="#fff" /><path d="M2 4h12M2 8h12M2 12h12" stroke="#444" /></Svg></button>
        <button aria-label="Tree view" className="mb-1.5 ml-5"><Svg className="size-4" box={16}><rect width="16" height="15" fill="#e4ecf4" /><path d="M2 3h4v4H2zM6 8h4v4H6z" fill="#d8c41e" /><path d="M8 3h6M8 6h6M11 10h4M11 13h4M3 6l9 7" stroke="#345" strokeWidth="1.500" /></Svg></button>
        <button aria-label="Table view" className="ml-3 flex h-7 w-[27px] items-center justify-center rounded-t bg-[#5f8ac7]"><Svg className="size-4" box={16}><rect x=".5" y=".5" width="15" height="15" fill="#fff" stroke="#1f3f73" /><path d="M1 4h14M1 8h14M1 12h14M4.500 1v14M8 1v14M12 1v14" stroke="#6f8cba" /></Svg></button>
        <button aria-label="Highlight help" className="mb-2 ml-auto"><Svg className="size-4" box={16}><circle cx="5" cy="10" r="4.500" fill="#1d3fc4" /><path d="M7 4c0-4 8-4 8 0 0 3-4 2-4 6M11 12v3" stroke="#c8c8c8" strokeWidth="2.500" /></Svg></button>
        <button aria-label="Help" className="mr-2.5 mb-2 ml-4"><Svg className="size-4" box={16}><path d="M1 1v12l3-3 2 5 2-1-2-5h4z" fill="#ddd" /><path d="M7 4c0-4 8-4 8 0 0 3-4 2-4 6M11 12v3" stroke="#b8b8b8" strokeWidth="2.500" /></Svg></button>
      </div>
      <div className="mr-0.5 flex h-[650px] shrink-0 flex-col border-y border-r-2 border-[#72767d] bg-[#efefef]">
        <div className="flex h-[626px] shrink-0 overflow-hidden">
          <div className="flex-1">
            <table className="w-full table-fixed border-separate border-spacing-0 bg-[#444]">
              <colgroup><col /><col className="w-[62px]" /></colgroup>
              <thead>
                <tr className="h-7 bg-white text-left text-black">
                  <th className="border-r border-[#d8d8d8] p-0 font-normal"><span className="flex w-2 justify-end overflow-hidden leading-5">Name</span></th>
                  <th className="p-0 pl-1.5 font-normal">Status</th>
                </tr>
              </thead>
              <tbody>
                <AssetRow name="Autodesk Vault" status="Logged" className="pl-2" />
                <AssetRow icon={<MaxLogo />} name="Combat_Semi_Heavy_Submarine_in_Dry_Dock_max_vray...." status="Ok" className="gap-0.5 pl-1.5" />
                <AssetRow
                  icon={<Svg className="size-4" box={16}><path d="M5 1h10l-2 12H3z" fill="#12d41c" stroke="#111" strokeWidth="1.500" /><path d="M5 1h10" stroke="#7b1f8c" strokeWidth="2" /><path d="M0 15l4-3 9 2z" fill="#111" /></Svg>}
                  name="Maps / Shaders"
                  status=""
                  className="gap-1 pl-[30px]"
                />
                {maps.map((m) => <AssetRow key={m} icon={<FileIcon />} name={m} status="Found" className="gap-[5px] pl-[50px]" />)}
              </tbody>
            </table>
          </div>
          <div className="w-[23px] shrink-0 pt-[22px] pl-2"><div className="h-[284px] w-[7px] bg-[#858585]" /></div>
        </div>
        <div className="mt-2 h-[7px] w-[336px] bg-[#858585]" />
      </div>
      <div className="mt-1 mr-[3px] h-[31px] shrink-0 border-2 border-l-0 border-[#eee]" />
    </section>
  );
}

function MaterialBrowser() {
  return (
    <section className="absolute top-[729px] left-[531px] flex h-[349px] w-[387px] flex-col overflow-hidden rounded-lg bg-[#444] shadow-xl">
      <header className="flex h-10 shrink-0 items-center gap-[7px] bg-[#f3f3f3] pl-2.5 text-[#8c8c8c]">
        <MaxLogo />
        <h2 className="text-[15px]">Material/Map Browser</h2>
        <button aria-label="Close" className="mr-3.5 ml-auto"><Close /></button>
      </header>
      <div className="flex h-[33px] shrink-0 items-start pt-[3px] pr-[3px]">
        <svg className="mt-2 mr-2 ml-[7px] h-1.5 w-2.5" viewBox="0 0 10 6" fill="#ddd"><path d="M0 0h10L5 6z" /></svg>
        <input aria-label="Search by name" placeholder="Search by Name ..." className="h-[22px] flex-1 bg-[#646464] pb-1 pl-[5px] text-[13px] placeholder:text-[#d6d6d6]" />
      </div>
      <div className="flex min-h-0 flex-1 border-t-2 border-black font-['DejaVu_Sans_Condensed','Noto_Sans',sans-serif] text-sm leading-none text-white">
        <div className="min-w-0 flex-1 overflow-hidden pr-1.5 pl-1">
          <h3 className="-mt-2 flex h-[22px] items-center gap-1.5 bg-[#505050] pl-2 font-['Noto_Sans',sans-serif] text-[13px]"><span>-</span>Scene Materials</h3>
          <ul className="mt-[3px] mr-px ml-3 h-[256px] border-2 border-[#1f1f1f]">
            {materials.map((m, i) => (
              <li key={m.name} className={clsx("flex h-[26px] items-center odd:h-[27px]", i === 1 ? "border border-white" : "border-b-2 border-[#1f1f1f]")}>
                <svg className="ml-0.5 size-5 shrink-0" viewBox="0 0 20 20">
                  <rect width="20" height="20" fill="#858585" />
                  <circle cx="9" cy="10" r="8.500" fill={m.tone} />
                  <path d="M4 8c2-4 5-5 8-4 1 3-2 3-3 5s-3 1-5-1zM11 11c2-1 4-1 5 0-1 3-2 3-4 4z" fill={m.spot} opacity=".55" />
                  {i === 8 && <path d="M19 10v9h-9c4-1 2-5 9-9z" fill="#fff" />}
                </svg>
                <span className="relative ml-1.5 flex h-full flex-1 items-center overflow-hidden whitespace-pre">
                  <svg className="absolute right-0 h-full w-[42px]" viewBox="0 0 42 25" preserveAspectRatio="none"><path d="M20 0h22v25H0z" fill="#b00000" /></svg>
                  <span className="relative">{m.name}{"    "}{m.type}</span>
                </span>
              </li>
            ))}
          </ul>
        </div>
        <div className="flex w-3 flex-col border-l-2 border-black bg-[#333]">
          <div className="mt-[213px] flex h-8 flex-col items-center justify-center gap-0.5 bg-linear-to-r from-[#999] to-[#666]">
            <span className="h-px w-1.5 bg-black" /><span className="h-px w-1.5 bg-black" /><span className="h-px w-1.5 bg-black" />
          </div>
        </div>
      </div>
    </section>
  );
}

const filterIcons: [string, ReactNode][] = [
  ["Geometry", <circle cx="10" cy="10" r="8" fill={GRAY} stroke="#333" />],
  ["Shapes", <g stroke="#333"><circle cx="8" cy="8" r="6.500" fill={GRAY} /><path d="M8 8h10v10H8z" fill={GRAY} fillOpacity=".6" strokeWidth="1.500" /></g>],
  ["Lights", <path d="M10 1c-8 0-7 8-4 11v4c0 4 8 4 8 0v-4c3-3 4-11-4-11z" fill={GRAY} stroke="#333" />],
  ["Cameras", <path d="M1 4h13v12H1zM14 8l5-4v12l-5-4z" fill={GRAY} stroke="#333" />],
  ["Helpers", <path d="M3 2l15 16H3zM6 9v6h6z" fill={GRAY} stroke="#333" fillRule="evenodd" />],
  ["Space warps", <g><path d="M1 5c4 3 6-2 9 0s5 1 9-1M1 11c4 3 6-2 9 0s5 1 9-1M1 17c4 3 6-2 9 0s5 1 9-1" stroke="#333" strokeWidth="4" /><path d="M1 5c4 3 6-2 9 0s5 1 9-1M1 11c4 3 6-2 9 0s5 1 9-1M1 17c4 3 6-2 9 0s5 1 9-1" stroke={GRAY} strokeWidth="2" /></g>],
  ["Groups", <g><rect x="2" y="2" width="16" height="16" fill="#3b4747" stroke={TEAL} strokeWidth="1.500" /><circle cx="8" cy="8" r="4" fill={GRAY} /><path d="M10 9h6v7H8v-4z" fill={GRAY} stroke="#333" /></g>],
  ["Xrefs", <g><circle cx="10" cy="10" r="8.500" fill={GRAY} stroke="#333" /><path d="M8 4h4v6h3l-5 5-5-5h3zM5 16h10" fill="#1f9a9a" stroke="#1f9a9a" /></g>],
  ["Bones", <path d="M3 1a3 3 0 0 1 5 2l10 14-1 1L4 8A3 3 0 0 1 3 1z" fill={GRAY} stroke="#333" />],
  ["Containers", <g stroke="#333"><path d="M1 3h18v4H1zM3 7h14v10H3z" fill={GRAY} /><path d="M6 10h8" strokeWidth="2" /></g>],
  ["Frozen", <g><path d="M10 1v18M2 5l16 10M18 5L2 15M7 3l3 2 3-2M7 17l3-2 3 2M3 8l2-2-1-3M17 12l-2 2 1 3M17 8l-2-2 1-3M3 12l2 2-1 3" stroke="#555" strokeWidth="2.500" /><path d="M10 1v18M2 5l16 10M18 5L2 15M7 3l3 2 3-2M7 17l3-2 3 2M3 8l2-2-1-3M17 12l-2 2 1 3M17 8l-2-2 1-3M3 12l2 2-1 3" stroke={GRAY} strokeWidth="1.500" /></g>],
  ["Hidden", <g><path d="M1 10c5-8 13-8 18 0-5 8-13 8-18 0z" fill={GRAY} stroke="#333" /><circle cx="10" cy="10" r="3.500" fill="#333" /><circle cx="11" cy="9" r="1" fill={GRAY} /></g>],
];

const displayIcons: [string, ReactNode][] = [
  ["Display all", <g><path d="M3 1h14v18H3z" fill={GRAY} /><path d="M6 5h8M6 8h6M6 11h8M6 14h5" stroke="#444" strokeWidth="1.500" /></g>],
  ["Display none", <path d="M3 1h14v18H3z" fill={GRAY} />],
  ["Invert display", <g><path d="M3 1.500h14v17H3z" fill="#2c2c2c" stroke={GRAY} strokeWidth="1.500" /><path d="M6 5h8M6 8h6M6 11h8M6 14h5" stroke={GRAY} strokeWidth="1.500" /></g>],
];

const funnel = "M1 2h18v2l-7 7v8l-4-3v-5L1 4z";

function SceneNode({ node }: { node: Node }) {
  const { name, level, group, arrow } = node;
  return (
    <li className={clsx("group flex h-[23px] items-center nth-[3n]:h-6", level === 0 && "pl-px", level === 1 && "pl-5", level === 2 && "pl-10")}>
      <span className="flex w-[18px] shrink-0 items-center justify-center">
        {arrow ? (
          <svg className={arrow === "open" ? "h-2 w-3.5" : "h-3.5 w-2"} viewBox="0 0 14 14" preserveAspectRatio="none" fill="#fff"><path d={arrow === "open" ? "M0 0h14L7 14z" : "M0 0l14 7-14 7z"} /></svg>
        ) : (
          <span className="ml-2.5 w-2 border-t border-dotted border-[#6d6d6d]" />
        )}
      </span>
      <Eye className="ml-0.5 h-3.5 w-[17px]" />
      {group ? <GroupIcon className="ml-1 size-[17px]" /> : <span className="ml-[5px] size-[15px] shrink-0 rounded-full bg-[#d4d4d4]" />}
      <span
        className={clsx(
          "flex h-full min-w-0 flex-1 items-center overflow-hidden pl-1 whitespace-nowrap",
          group ? "ml-[3px]" : "ml-1",
          name === "Dock_Inside" ? "bg-[#828282]" : level === 0 ? "bg-[#505050]" : "bg-[#505050] group-even:bg-[#5a5a5a]",
        )}
      >
        {name}
      </span>
    </li>
  );
}

function SceneExplorer() {
  return (
    <section className="absolute top-[150px] right-[212px] bottom-0 flex w-[381px] flex-col overflow-hidden rounded-t-lg border-r border-[#333] bg-[#444] text-[13px] leading-none text-[#f2f2f2] shadow-xl">
      <header className="flex h-[39px] shrink-0 items-center gap-[7px] bg-[#f3f3f3] pl-2.5 text-[#8c8c8c]">
        <MaxLogo />
        <h2 className="text-[15px]">Scene Explorer - Sce...</h2>
        <div className="mr-[22px] ml-auto flex gap-[46px]"><Minimize /><Maximize /><Close /></div>
      </header>
      <nav className="flex h-[31px] shrink-0 items-center gap-[23px] pl-[17px] text-[15px]">
        {["Select", "Display", "Edit", "Customize"].map((m) => <button key={m}>{m}</button>)}
      </nav>
      <div className="flex h-8 shrink-0 items-center pl-1">
        <input aria-label="Find" className="h-[29px] w-[200px] border border-[#666] bg-[#404040]" />
        <button aria-label="Clear" className="ml-1.5"><Svg className="size-4" box={16}><path d="M2 2l12 12M14 2L2 14" stroke="#a8a8a8" strokeWidth="2.500" /></Svg></button>
        <button aria-label="Filter" className="ml-[11px] flex size-8 items-center justify-center bg-[#5f8ac7]"><Svg className="size-6" box={24}><path d="M2 3h20v2l-7 7v9l-5-3v-6L2 5z" fill={GRAY} stroke="#333" /><path d="M12 18l5-4v2h6v4h-6v2z" fill={TEAL} stroke="#333" strokeWidth=".7" /></Svg></button>
        <span className="mr-2 ml-1 h-8 w-px bg-[#777]" />
        <button aria-label="Lock"><Svg className="size-5" box={20}><path d="M4 9h12v10H4z" fill={GRAY} /><path d="M6.500 9V5c0-5 7-5 7 0v4" stroke={GRAY} strokeWidth="2" /><path d="M10 12v4" stroke="#333" strokeWidth="2.500" /></Svg></button>
        <button aria-label="Pick parent" className="ml-3"><Svg className="size-5" box={20}><path d="M1 1h13v5H1z" fill={TEAL} /><path d="M8 6v12h5M8 12h5" stroke={GRAY} strokeWidth="1.500" /><path d="M14 10h4v3h-4zM14 16h4v3h-4z" fill={GRAY} /></Svg></button>
        <button aria-label="Pick child" className="ml-[11px]"><Svg className="size-5" box={20}><path d="M1 1h13v5H1z" fill={GRAY} /><path d="M8 6v12h5M8 12h5" stroke={TEAL} strokeWidth="1.500" /><path d="M14 10h4v3h-4zM14 16h4v3h-4z" fill={TEAL} /></Svg></button>
      </div>
      <div className="flex shrink-0 pt-1">
        <div className="flex w-[28px] shrink-0 flex-col items-start gap-[3px] pt-0.5">
          {filterIcons.map(([label, icon], i) => (
            <button key={label} aria-label={label} className={clsx("flex w-[25px] items-center justify-center bg-[#5f8ac7]", i % 5 === 4 ? "h-[25px]" : "h-[26px]")}>
              <Svg className="size-5" box={20}>{icon}</Svg>
            </button>
          ))}
          <span className="ml-0.5 h-px w-5 bg-[#777]" />
          {displayIcons.map(([label, icon]) => (
            <button key={label} aria-label={label} className="flex h-[26px] w-[25px] items-center justify-center"><Svg className="size-5" box={20}>{icon}</Svg></button>
          ))}
          <span className="ml-0.5 h-px w-5 bg-[#777]" />
          <button aria-label="Filter options" className="flex h-[26px] w-[25px] items-center justify-center"><Svg className="size-5" box={20}><path d={funnel} fill="#999" /><circle cx="14" cy="14" r="4" fill="#444" stroke="#999" strokeWidth="2.500" /></Svg></button>
          <button aria-label="Filter selection" className="flex h-[26px] w-[25px] items-center justify-center"><Svg className="size-5" box={20}><path d={funnel} fill={GRAY} /></Svg></button>
          <button aria-label="Local explorer" className="flex h-[26px] w-[25px] items-center justify-center"><Svg className="size-5" box={20}><path d="M1 19V5h2V2h4v3h6V2h4v3h2v14z" stroke={GRAY} strokeWidth="1.500" /></Svg></button>
        </div>
        <div className="flex min-w-0 flex-1 flex-col">
          <h3 className="flex h-6 items-center border border-[#333] pb-1 pl-0.5">Name (Sorted Descending)</h3>
          <ul>{nodes.map((n) => <SceneNode key={n.name} node={n} />)}</ul>
          <div className="mt-3 flex h-[22px] items-center bg-[#efefef] pl-[22px]"><span className="h-[7px] w-[218px] bg-[#858585]" /></div>
        </div>
      </div>
      <footer className="flex h-5 shrink-0 items-start overflow-hidden pt-0.5 pl-1">
        <button className="mt-0.5 flex h-8 w-[194px] items-start border border-[#666] pt-1.5 pl-0.5 text-[15px] text-[#f2f200]">Scene Explorer</button>
        <span className="mt-3 ml-1.5 border-4 border-transparent border-t-black" />
        <span className="ml-2 h-8 w-0.5 bg-[#2c2c2c]" />
        <button aria-label="Layers" className="mt-1 ml-1.5"><Svg className="size-5" box={20}><path d="M10 2l9 4-9 4-9-4zM1 10l9 4 9-4v3l-9 4-9-4z" fill={GRAY} /></Svg></button>
        <button aria-label="Hierarchy" className="ml-1.5 flex h-8 w-8 justify-center bg-[#5f8ac7] pt-1"><Svg className="size-5" box={20}><rect x="3" y="1" width="14" height="8" fill={GRAY} stroke="#222" /><path d="M10 9v5M4 16v-3h12v3" stroke="#222" strokeWidth="1.500" /></Svg></button>
        <svg className="mt-1 mr-1 ml-auto size-2.5" viewBox="0 0 10 10" fill="none" stroke="#5b5bb5"><path d="M1 1l4 4-4 4M5 1l4 4-4 4" /></svg>
      </footer>
    </section>
  );
}

export default function App() {
  return (
    <div className="relative flex h-screen flex-col overflow-hidden bg-[#444] font-['Noto_Sans','Open_Sans',sans-serif]">
      <header className="flex h-[33px] shrink-0 items-center border-t-2 border-b border-t-white border-b-[#999] bg-[#edf2f9]">
        <h1 className="flex w-[582px] justify-end overflow-hidden text-[15px] whitespace-nowrap text-[#1b1b1b]">
          Combat_Semi_Heavy_Submarine_in_Dry_Dock_max_vray.max - Autodesk 3ds Max 2020
        </h1>
        <div className="mr-[26px] ml-auto flex items-center gap-[46px] text-[#222]">
          <Minimize />
          <Svg className="size-4" box={16}><rect x="2" y="4.500" width="9" height="9" rx="1.500" stroke="currentColor" strokeWidth="1.300" /><path d="M5 2.500h6.500a2 2 0 0 1 2 2V11" stroke="currentColor" strokeWidth="1.300" /></Svg>
        </div>
      </header>

      <nav className="flex h-7 shrink-0 items-center border-b border-[#222] bg-linear-to-b from-[#474747] to-[#555] pl-2 text-sm text-[#f0f0f0]">
        <div className="flex gap-7">{mainMenu.map((m) => <button key={m}>{m}</button>)}</div>
        <span className="mr-1.5 ml-auto text-[13px] text-[#d6d6d6]">Workspaces:</span>
        <button className="h-full w-[121px] border-l border-[#3a3a3a] bg-[#5d5d5d] pl-[7px] text-left text-[13px] whitespace-nowrap text-[#d6d6d6]">Design Standard</button>
      </nav>

      <MainToolbar />
      <LightsToolbar />

      <div className="mb-1 flex h-[27px] shrink-0 items-center border-t border-[#636363] bg-[#525252] text-[15px] leading-none text-[#a8a8a8]">
        <div className="flex gap-[26px]">{ribbonTabs.map((t) => <button key={t}>{t}</button>)}</div>
        <button className="ml-3.5 h-[22px] self-end border border-b-0 border-[#333] bg-[#646464] px-2.5 pb-1 whitespace-nowrap text-[#d6d6d6]">Lighting And Rendering</button>
        <button aria-label="Ribbon options" className="ml-[31px] flex items-center gap-2">
          <svg className="h-2.5 w-[18px]" viewBox="0 0 18 10"><rect width="18" height="10" rx="2" fill="#e4e8ec" /><path d="M6 3h6L9 7z" fill="#222" /></svg>
          <svg className="h-1.5 w-2" viewBox="0 0 8 6" fill="#ccc"><path d="M1 1h6L4 5z" /></svg>
        </button>
      </div>

      <div className="flex min-h-0 flex-1">
        <Viewport />
        <CommandPanel />
      </div>

      <TimeRuler />
      <StatusBar />

      <AssetTracking />
      <MaterialBrowser />
      <SceneExplorer />
    </div>
  );
}
